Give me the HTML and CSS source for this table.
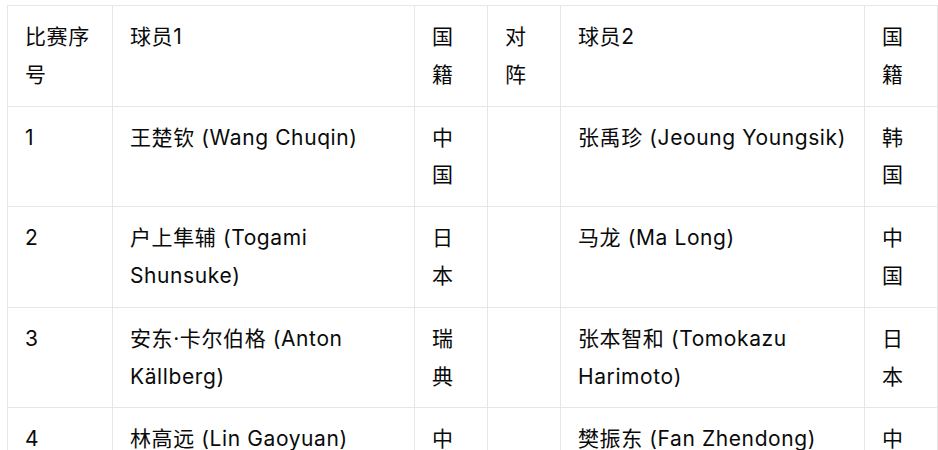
FILE: index.html
```html
<!DOCTYPE html>
<html lang="zh-CN">
<head>
<meta charset="utf-8">
<link rel="stylesheet" href="styles.css">
</head>
<body>
<table class="match-table">
  <colgroup>
    <col class="c-no">
    <col class="c-player">
    <col class="c-nat">
    <col class="c-vs">
    <col class="c-player2">
    <col class="c-nat">
  </colgroup>
  <thead>
    <tr><th>比赛序号</th><th>球员1</th><th>国籍</th><th>对阵</th><th>球员2</th><th>国籍</th></tr>
  </thead>
  <tbody>
    <tr><td>1</td><td>王楚钦 (Wang Chuqin)</td><td>中国</td><td></td><td>张禹珍 (Jeoung Youngsik)</td><td>韩国</td></tr>
    <tr><td>2</td><td>户上隼辅 (Togami Shunsuke)</td><td>日本</td><td></td><td>马龙 (Ma Long)</td><td>中国</td></tr>
    <tr><td>3</td><td>安东·卡尔伯格 (Anton Källberg)</td><td>瑞典</td><td></td><td>张本智和 (Tomokazu Harimoto)</td><td>日本</td></tr>
    <tr><td>4</td><td>林高远 (Lin Gaoyuan)</td><td>中国</td><td></td><td>樊振东 (Fan Zhendong)</td><td>中国</td></tr>
  </tbody>
</table>
</body>
</html>
```
FILE: styles.css
```css
html, body {
  margin: 0;
  background: #ffffff;
}
body {
  padding: 5px 0 0 7px;
  font-family: "Inter", "Noto Sans CJK SC", sans-serif;
  font-size: 21px;
  letter-spacing: 0.6px;
  color: #0a0a0a;
}
.match-table {
  border-collapse: collapse;
  table-layout: fixed;
  width: 931px;
}
.c-no { width: 105px; }
.c-player { width: 302px; }
.c-nat { width: 73px; }
.c-vs { width: 73px; }
.c-player2 { width: 304px; }
.match-table th,
.match-table td {
  border: 1px solid #e6e6e6;
  padding: 12px 16px 12px 17px;
  line-height: 37.8px;
  text-align: left;
  vertical-align: top;
  font-weight: 400;
}
```
